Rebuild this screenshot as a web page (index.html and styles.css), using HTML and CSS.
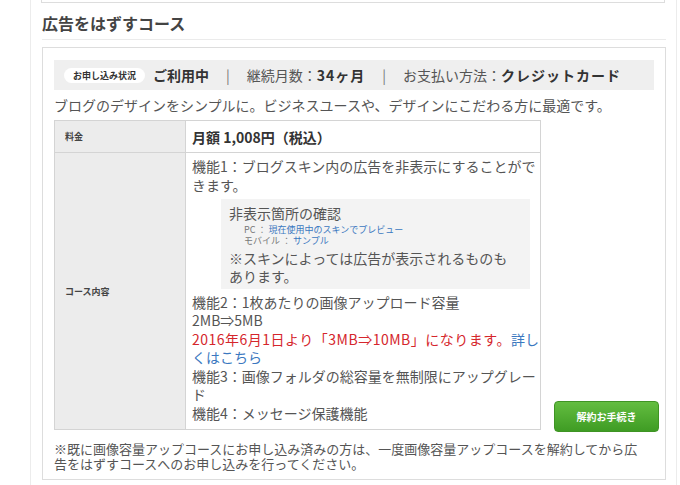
FILE: index.html
```html
<!DOCTYPE html>
<html lang="ja">
<head>
    <meta charset="UTF-8">
    <meta name="viewport" content="width=device-width, initial-scale=1.0">
    <title>広告をはずすコース</title>
    <link rel="stylesheet" href="styles.css">
</head>
<body>
    <div class="page">
        <div class="prev-box"></div>

        <h2 class="section-title">広告をはずすコース</h2>

        <div class="course-box">
            <div class="status-bar">
                <span class="badge">お申し込み状況</span>
                <span class="status">ご利用中</span>
                <span class="sep">|</span>
                <span>継続月数：<b>34ヶ月</b></span>
                <span class="sep">|</span>
                <span>お支払い方法：<b>クレジットカード</b></span>
            </div>

            <p class="desc">ブログのデザインをシンプルに。ビジネスユースや、デザインにこだわる方に最適です。</p>

            <div class="course-row">
                <table class="course-table">
                    <tr class="price-row">
                        <th>料金</th>
                        <td class="price">月額 1,008円（税込）</td>
                    </tr>
                    <tr>
                        <th>コース内容</th>
                        <td class="features">
                            <p>機能1：ブログスキン内の広告を非表示にすることができます。</p>
                            <div class="check-box">
                                <p>非表示箇所の確認</p>
                                <ul class="check-links">
                                    <li>PC ： <a href="#">現在使用中のスキンでプレビュー</a></li>
                                    <li>モバイル ： <a href="#">サンプル</a></li>
                                </ul>
                                <p>※スキンによっては広告が表示されるものもあります。</p>
                            </div>
                            <p>機能2：1枚あたりの画像アップロード容量<br>2MB⇒5MB<br><span class="notice">2016年6月1日より「3MB⇒10MB」になります。</span><a href="#">詳しくはこちら</a></p>
                            <p>機能3：画像フォルダの総容量を無制限にアップグレード</p>
                            <p>機能4：メッセージ保護機能</p>
                        </td>
                    </tr>
                </table>
                <button class="cancel-btn">解約お手続き</button>
            </div>

            <p class="note">※既に画像容量アップコースにお申し込み済みの方は、一度画像容量アップコースを解約してから広告をはずすコースへのお申し込みを行ってください。</p>
        </div>
    </div>
</body>
</html>
```

FILE: styles.css
```css
body {
    margin: 0;
    font-family: "Noto Sans CJK JP", "Noto Sans", sans-serif;
    background-color: #fff;
    color: #555;
}

.page {
    margin-left: 30px;
    width: 625px;
    padding: 0 10px 0 10px;
    border-left: 1px solid #ececec;
    border-right: 1px solid #ececec;
    height: 485px;
    overflow: hidden;
}

.prev-box {
    height: 2px;
    margin-right: 1px;
    border: 1px solid #ddd;
    border-top: none;
}

.section-title {
    margin: 0 0 0 1px;
    padding: 9px 0 5px;
    font-size: 16px;
    line-height: 22px;
    font-weight: bold;
    color: #444;
    border-bottom: 1px solid #ebebeb;
}

.course-box {
    margin: 7px 0 0 1px;
    padding: 12px 11px 8px 11px;
    border: 1px solid #ddd;
}

.status-bar {
    display: flex;
    align-items: center;
    height: 30px;
    padding-left: 10px;
    background-color: #efefef;
    font-size: 14px;
    color: #555;
}

.status-bar b {
    color: #333;
    letter-spacing: 1px;
}

.badge {
    display: inline-block;
    height: 15px;
    line-height: 15px;
    padding: 0 9px;
    margin-right: 8px;
    border-radius: 8px;
    background: #fff;
    font-size: 9px;
    font-weight: bold;
    color: #333;
}

.status {
    font-weight: bold;
    color: #333;
}

.sep {
    margin: 0 17px;
    color: #777;
}

.desc {
    margin: 0;
    font-size: 14px;
    line-height: 30px;
}

.course-row {
    display: flex;
    align-items: flex-end;
    gap: 13px;
    margin-right: -4px;
}

.course-table {
    flex-shrink: 0;
    width: 487px;
    border-collapse: collapse;
    font-size: 14px;
}

.course-table th,
.course-table td {
    border: 1px solid #d4d4d4;
}

.course-table th {
    width: 120px;
    padding: 0 0 0 10px;
    background-color: #ececec;
    font-size: 9px;
    font-weight: bold;
    color: #444;
    text-align: left;
    vertical-align: middle;
}

.price-row {
    height: 32px;
}

.price {
    padding: 0 6px;
    font-weight: bold;
    color: #333;
}

.features {
    padding: 4px 0 7px 6px;
    line-height: 18.5px;
    vertical-align: top;
}

.features p {
    margin: 0;
}

.features a {
    color: #3b78c0;
    text-decoration: none;
}

.notice {
    color: #d5262c;
    letter-spacing: 0.5px;
}

.check-box {
    width: 286px;
    margin: 5px 6px 4px 29px;
    padding: 5px 15px 3px 8px;
    background-color: #f3f3f3;
}

.check-links {
    list-style: none;
    margin: 1px 0 2px;
    padding-left: 15px;
    font-size: 9px;
    line-height: 11.5px;
    color: #777;
}

.cancel-btn {
    flex-shrink: 0;
    width: 105px;
    height: 31px;
    margin-bottom: -2px;
    border: 1px solid #3f9424;
    border-radius: 4px;
    background: linear-gradient(#63bd40, #3f9c24);
    color: #fff;
    font-family: inherit;
    font-size: 10px;
    font-weight: bold;
    cursor: pointer;
}

.note {
    width: 590px;
    margin: 11px 0 0;
    font-size: 13px;
    line-height: 15px;
}
```
